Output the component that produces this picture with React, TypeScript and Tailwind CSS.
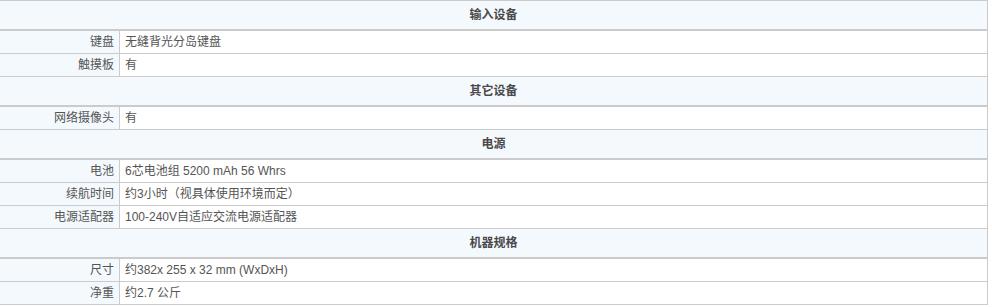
import React from 'react';

type Section = {
  title: string;
  rows: [string, string][];
};

const sections: Section[] = [
  {
    title: '输入设备',
    rows: [
      ['键盘', '无缝背光分岛键盘'],
      ['触摸板', '有'],
    ],
  },
  {
    title: '其它设备',
    rows: [['网络摄像头', '有']],
  },
  {
    title: '电源',
    rows: [
      ['电池', '6芯电池组 5200 mAh 56 Whrs'],
      ['续航时间', '约3小时（视具体使用环境而定）'],
      ['电源适配器', '100-240V自适应交流电源适配器'],
    ],
  },
  {
    title: '机器规格',
    rows: [
      ['尺寸', '约382x 255 x 32 mm (WxDxH)'],
      ['净重', '约2.7 公斤'],
    ],
  },
];

const App: React.FC = () => {
  return (
    <div
      className="w-[992px] h-[307px] bg-white overflow-hidden text-[12px] text-[#555]"
      style={{ fontFamily: '"Liberation Sans", "Noto Sans CJK SC", sans-serif' }}
    >
      <div className="w-[988px] border-t border-r border-[#cbcbcb]">
        {sections.map((section) => (
          <div key={section.title}>
            <div className="h-[30px] bg-[#f4f9fe] border-b-2 border-[#cbcbcb] flex items-center justify-center font-bold text-[#4a4a4a]">
              {section.title}
            </div>
            {section.rows.map(([label, value]) => (
              <div key={label} className="h-[23px] flex border-b border-[#cbcbcb]">
                <div className="w-[120px] shrink-0 bg-[#f4f9fe] border-r border-[#cbcbcb] flex items-center justify-end pr-[5px]">
                  {label}
                </div>
                <div className="flex-1 flex items-center pl-[5px]">{value}</div>
              </div>
            ))}
          </div>
        ))}
      </div>
    </div>
  );
};

export default App;
